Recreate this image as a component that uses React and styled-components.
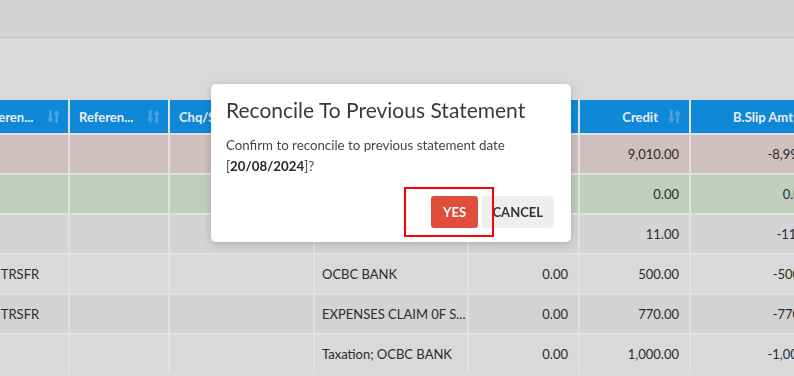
import React from 'react';
import styled, { createGlobalStyle } from 'styled-components';

const GlobalStyle = createGlobalStyle`
  html, body {
    margin: 0;
    padding: 0;
    background: #d9d9d9;
    font-family: Lato, "Liberation Sans", sans-serif;
    overflow: hidden;
  }
`;

const Page = styled.div`
  display: flex;
  flex-direction: column;
  min-height: 100vh;
`;

const TopBar = styled.div`
  height: 37px;
  background: #d2d2d2;
  border-bottom: 1px solid #c3c3c3;
`;

const Content = styled.div`
  padding-top: 62px;
  overflow: hidden;
`;

const Grid = styled.div`
  display: grid;
  grid-template-columns: 98px 98px 143px 152px 109px 109px 212px;
  grid-template-rows: 33px;
  grid-auto-rows: 38px;
  gap: 2px;
  width: max-content;
  margin-left: -30px;
  background: #e1e1e1;
`;

const HeadCell = styled.div`
  background: #0f88d8;
  color: #e9edf1;
  font-size: 13px;
  font-weight: 700;
  display: flex;
  align-items: center;
  gap: 10px;
  padding: 0 8px 0 ${({ $padLeft }) => $padLeft || 9}px;
  justify-content: ${({ $align }) => ($align === 'right' ? 'flex-end' : 'space-between')};
  white-space: nowrap;
  overflow: hidden;
`;

const Cell = styled.div`
  background: ${({ $bg }) => $bg};
  color: #2c2c2c;
  font-size: 13px;
  display: flex;
  align-items: center;
  padding: 0 10px 0 7px;
  white-space: nowrap;
  overflow: hidden;
  justify-content: ${({ $align }) =>
    $align === 'right' ? 'flex-end' : $align === 'center' ? 'center' : 'flex-start'};
`;

const SortIcon = () => (
  <svg width="13" height="15" viewBox="0 0 13 15" fill="#4aa3e0">
    <rect x="2" y="1" width="2.6" height="10" />
    <polygon points="0,9.5 6.6,9.5 3.3,14" />
    <rect x="8.4" y="4" width="2.6" height="10" />
    <polygon points="6.4,5.5 13,5.5 9.7,1" />
  </svg>
);

const Backdrop = styled.div`
  position: fixed;
  inset: 0;
  padding: 84px 0 0 211px;
`;

const Dialog = styled.div`
  position: relative;
  width: 360px;
  box-sizing: border-box;
  background: #fff;
  border-radius: 5px;
  box-shadow: 0 2px 8px rgba(0, 0, 0, 0.18);
  padding: 14px 17px 14px 15px;
`;

const Title = styled.div`
  font-size: 21px;
  line-height: 24px;
  color: #3a3a3a;
`;

const Message = styled.div`
  margin-top: 13px;
  font-size: 13.3px;
  line-height: 21px;
  color: #454545;
  b {
    color: #2a2a2a;
  }
`;

const Footer = styled.div`
  margin-top: 19px;
  display: flex;
  justify-content: flex-end;
  gap: 4px;
`;

const Button = styled.button`
  height: 32px;
  padding: 0 ${({ $primary }) => ($primary ? 11.5 : 11)}px;
  border: none;
  border-radius: 3px;
  font-family: inherit;
  font-size: 13px;
  font-weight: 700;
  text-transform: uppercase;
  background: ${({ $primary }) => ($primary ? '#e04e3b' : '#eceef0')};
  color: ${({ $primary }) => ($primary ? '#fff' : '#333')};
`;

const Highlight = styled.div`
  position: absolute;
  left: 193px;
  top: 103px;
  width: 90px;
  height: 50px;
  box-sizing: border-box;
  border: 2.5px solid #f00;
`;

const headers = [
  { label: 'Referen...' },
  { label: 'Referen...' },
  { label: 'Chq/Slip No' },
  { label: 'Description' },
  { label: 'Debit', align: 'right' },
  { label: 'Credit', align: 'right' },
  { label: 'B.Slip Amt', align: 'left', padLeft: 42, noIcon: true },
];

const rows = [
  { bg: '#cfbfbf', cells: ['', '', '', '', '0.00', '9,010.00', '-8,993.00'] },
  { bg: '#c1cebf', cells: ['', '', '', '', '0.00', '0.00', '0.00'] },
  { bg: '#d4d4d4', cells: ['', '', '', '', '0.00', '11.00', '-11.00'] },
  { bg: '#d9d9d9', cells: ['INT TRSFR', '', '', 'OCBC BANK', '0.00', '500.00', '-500.00'] },
  { bg: '#d3d3d3', cells: ['INT TRSFR', '', '', 'EXPENSES CLAIM 0F S...', '0.00', '770.00', '-770.00'] },
  { bg: '#d9d9d9', cells: ['', '', '', 'Taxation; OCBC BANK', '0.00', '1,000.00', '-1,000.00'] },
];

const cellAlign = ['left', 'left', 'left', 'left', 'right', 'right', 'center'];

export default function App() {
  return (
    <Page>
      <GlobalStyle />
      <TopBar />
      <Content>
        <Grid>
          {headers.map((h, i) => (
            <HeadCell key={i} $align={h.align} $padLeft={h.padLeft}>
              <span>{h.label}</span>
              {!h.noIcon && <SortIcon />}
            </HeadCell>
          ))}
          {rows.map((r, ri) =>
            r.cells.map((c, ci) => (
              <Cell key={`${ri}-${ci}`} $bg={r.bg} $align={cellAlign[ci]}>
                {c}
              </Cell>
            ))
          )}
        </Grid>
      </Content>
      <Backdrop>
        <Dialog>
          <Title>Reconcile To Previous Statement</Title>
          <Message>
            Confirm to reconcile to previous statement date
            <br />[<b>20/08/2024</b>]?
          </Message>
          <Footer>
            <Button $primary>Yes</Button>
            <Button>Cancel</Button>
          </Footer>
          <Highlight />
        </Dialog>
      </Backdrop>
    </Page>
  );
}
